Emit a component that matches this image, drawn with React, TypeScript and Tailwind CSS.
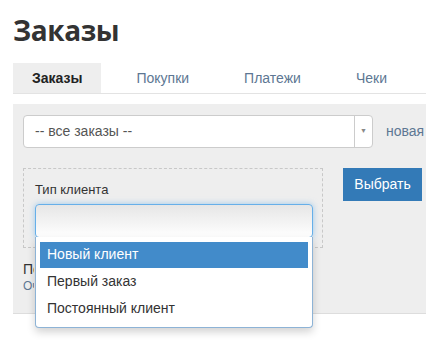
import React from "react";

const tabs = ["Заказы", "Покупки", "Платежи", "Чеки"];
const options = ["Новый клиент", "Первый заказ", "Постоянный клиент"];

export default function App() {
  return (
    <div className="relative h-[341px] w-[426px] overflow-hidden bg-white font-['Liberation_Sans',Arial,sans-serif] text-[14px] text-[#333]">
      <div className="w-[470px] pl-[13px] pt-[12px]">
        <h1 className="font-['Open_Sans',sans-serif] text-[28px] font-bold leading-[36px] tracking-[-0.4px] text-[#333]">
          Заказы
        </h1>

        {/* вкладки */}
        <div className="mt-[15px] flex h-[31px] gap-[15px] border-b border-[#e3e3e3]">
          {tabs.map((tab, i) => (
            <div
              key={tab}
              className={
                i === 0
                  ? "flex h-[30px] items-center bg-[#eeeeee] px-[19px] text-[14px] font-bold text-[#222]"
                  : "flex h-[30px] items-center px-[20px] text-[14px] text-[#5d7793]"
              }
            >
              {tab}
            </div>
          ))}
        </div>

        {/* фильтры */}
        <div className="mt-[10px] h-[210px] border-b border-[#dddddd] bg-[#eeeeee] pl-[10px] pt-[11px]">
          <div className="flex items-center">
            <div className="flex h-[33px] w-[350px] items-center rounded-[4px] border border-[#cccccc] bg-white">
              <span className="flex-1 pl-[11px] text-[#555]">-- все заказы --</span>
              <div className="flex h-full w-[18px] items-center justify-center border-l border-[#cccccc]">
                <span className="text-[7px] text-[#888]">▼</span>
              </div>
            </div>
            <span className="ml-[13px] text-[14px] text-[#5d7793]">новая</span>
          </div>

          <div className="mt-[20px] flex items-start">
            <div className="relative h-[80px] w-[300px] border border-dashed border-[#c8c8c8] pl-[11px] pt-[11px]">
              <div className="text-[13px] text-[#333]">Тип клиента</div>
              <div className="relative mt-[4px] w-[278px]">
                <div className="h-[34px] rounded-[4px] border border-[#66afe9] bg-gradient-to-b from-[#e6e6e6] to-white shadow-[0_0_6px_rgba(102,175,233,0.6)]" />
                <ul className="absolute left-0 top-[33px] z-10 w-[278px] rounded-b-[4px] border border-t-0 border-[#8db3d6] bg-white px-[4px] pb-[5px] pt-[5px] shadow-[0_4px_8px_rgba(0,0,0,0.18)]">
                  {options.map((opt, i) => (
                    <li
                      key={opt}
                      className={
                        i === 0
                          ? "flex h-[26px] items-center bg-[#428bca] pl-[7px] text-white"
                          : "flex h-[27px] items-center pl-[7px] text-[#333]"
                      }
                    >
                      {opt}
                    </li>
                  ))}
                </ul>
              </div>
            </div>
            <button className="ml-[20px] h-[33px] w-[79px] bg-[#337ab7] text-[14px] text-white">
              Выбрать
            </button>
          </div>

          {/* под выпадающим списком видно только начало строк */}
          <div className="mt-[12px] w-[11px] overflow-hidden whitespace-nowrap">
            <div className="text-[14px] leading-[18px] text-[#333]">Показать все заказы</div>
            <div className="text-[12px] leading-[16px] text-[#5d7793]">Очистить фильтр</div>
          </div>
        </div>
      </div>
    </div>
  );
}
